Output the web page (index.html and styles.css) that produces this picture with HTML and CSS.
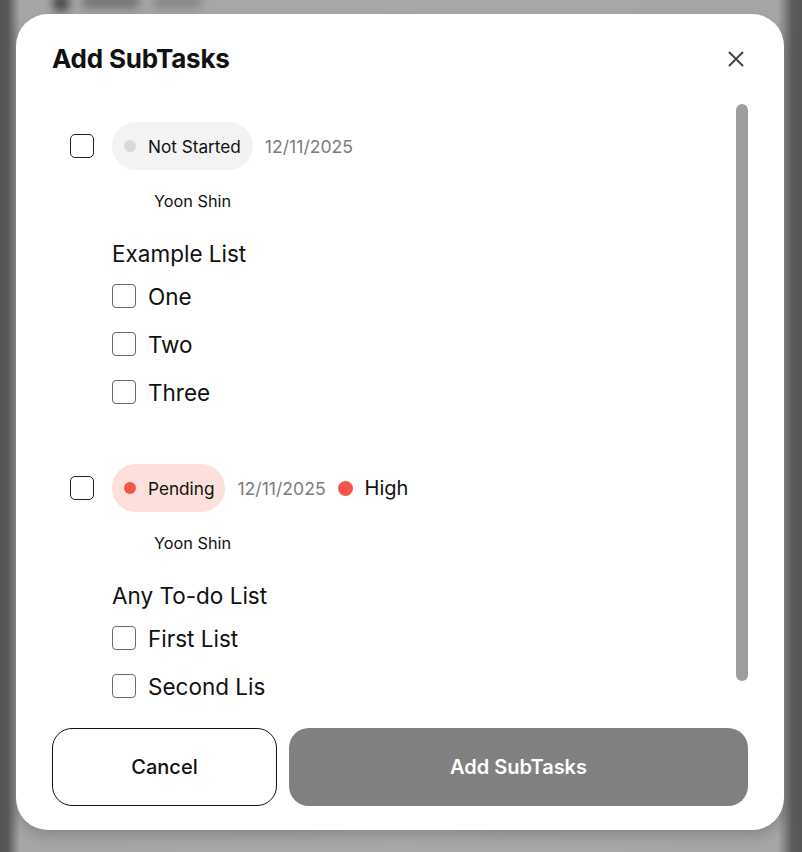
FILE: index.html
```html
<!DOCTYPE html>
<html lang="en">
<head>
<meta charset="utf-8">
<title>Add SubTasks</title>
<link rel="stylesheet" href="styles.css">
</head>
<body>
<div class="backdrop">
  <div class="ghost ghost-a"></div>
  <div class="ghost ghost-b"></div>
  <div class="ghost ghost-c"></div>
</div>
<div class="modal">
  <div class="modal-header">
    <h1 class="modal-title">Add SubTasks</h1>
    <button class="close-btn" aria-label="Close">
      <svg width="16" height="16" viewBox="0 0 16 16"><path d="M1.5 1.5 L14.5 14.5 M14.5 1.5 L1.5 14.5" stroke="#444" stroke-width="2" stroke-linecap="round" fill="none"/></svg>
    </button>
  </div>
  <div class="modal-body">
    <div class="scroll-area">
      <div class="task">
        <span class="task-check"></span>
        <div class="task-main">
          <div class="task-meta">
            <span class="pill pill-grey"><span class="dot dot-grey"></span>Not Started</span>
            <span class="date">12/11/2025</span>
          </div>
          <div class="assignee">Yoon Shin</div>
          <div class="list-title">Example List</div>
          <div class="list-item"><span class="item-check"></span>One</div>
          <div class="list-item"><span class="item-check"></span>Two</div>
          <div class="list-item"><span class="item-check"></span>Three</div>
        </div>
      </div>
      <div class="task">
        <span class="task-check"></span>
        <div class="task-main">
          <div class="task-meta">
            <span class="pill pill-red"><span class="dot dot-red"></span>Pending</span>
            <span class="date">12/11/2025</span>
            <span class="priority"><span class="priority-dot"></span>High</span>
          </div>
          <div class="assignee">Yoon Shin</div>
          <div class="list-title">Any To-do List</div>
          <div class="list-item"><span class="item-check"></span>First List</div>
          <div class="list-item"><span class="item-check"></span>Second Lis</div>
        </div>
      </div>
    </div>
    <div class="scroll-track"><div class="scroll-thumb"></div></div>
  </div>
  <div class="modal-footer">
    <button class="btn btn-cancel">Cancel</button>
    <button class="btn btn-primary">Add SubTasks</button>
  </div>
</div>
</body>
</html>
```

FILE: styles.css
```css
* { box-sizing: border-box; }
html, body { margin: 0; padding: 0; }
body {
  width: 802px;
  height: 852px;
  overflow: hidden;
  font-family: Inter, "Noto Sans", "Liberation Sans", sans-serif;
  color: #111;
  background: linear-gradient(to right, #545454 0px, #5a5a5a 8px, #7a7a7a 13px, #a6a6a6 20px, #a9a9a9 50%, #a6a6a6 778px, #7e7e7e 786px, #5c5c5c 792px, #555 802px);
  padding-top: 14px;
  padding-left: 16px;
  position: relative;
}
.backdrop { position: absolute; inset: 0; overflow: hidden; }
.ghost { position: absolute; background: #6a6a6a; filter: blur(4px); border-radius: 8px; }
.ghost-a { left: 52px; top: -6px; width: 18px; height: 18px; border-radius: 50%; background: #4a4a4a; }
.ghost-b { left: 82px; top: -4px; width: 58px; height: 12px; background: #707070; }
.ghost-c { left: 152px; top: -4px; width: 50px; height: 12px; background: #868686; }

.modal {
  position: relative;
  width: 768px;
  height: 816px;
  background: #fff;
  border-radius: 32px;
  padding: 28px 36px 24px;
  display: flex;
  flex-direction: column;
  box-shadow: 0 6px 14px rgba(0,0,0,0.18);
}
.modal-header {
  display: flex;
  align-items: center;
  justify-content: space-between;
  height: 34px;
}
.modal-title {
  margin: 0;
  font-size: 26px;
  line-height: 34px;
  font-weight: 700;
  letter-spacing: -0.2px;
}
.close-btn {
  border: 0;
  background: none;
  padding: 0;
  width: 24px;
  height: 24px;
  display: flex;
  align-items: center;
  justify-content: center;
}
.modal-body {
  margin-top: 28px;
  flex: 1;
  min-height: 0;
  display: flex;
  gap: 12px;
}
.scroll-area {
  flex: 1;
  overflow: hidden;
  padding: 18px 0 0 18px;
}
.scroll-track { width: 12px; }
.scroll-thumb {
  width: 12px;
  height: 577px;
  background: #9e9e9e;
  border-radius: 6px;
}
.task {
  display: flex;
  gap: 18px;
  margin-bottom: 48px;
}
.task-check {
  flex: none;
  width: 24px;
  height: 24px;
  margin-top: 12px;
  border: 1.5px solid #222;
  border-radius: 5px;
}
.task-main { display: flex; flex-direction: column; }
.task-meta {
  display: flex;
  align-items: center;
  height: 48px;
  gap: 12px;
}
.pill {
  display: inline-flex;
  align-items: center;
  height: 48px;
  padding: 0 12px;
  border-radius: 24px;
  font-size: 17.2px;
  gap: 12px;
  color: #111;
}
.pill-grey { background: #f3f3f3; }
.pill-red { background: #fde0db; padding-right: 11px; }
.dot { width: 12px; height: 12px; border-radius: 50%; }
.dot-grey { background: #d9d9d9; }
.dot-red { background: #f5564a; }
.date { font-size: 17.6px; color: #7b7b7b; }
.priority {
  display: inline-flex;
  align-items: center;
  gap: 12px;
  font-size: 20px;
  color: #111;
}
.priority-dot { width: 15px; height: 15px; border-radius: 50%; background: #f5564a; }
.assignee {
  margin-top: 21px;
  padding-left: 42px;
  font-size: 16.3px;
  line-height: 20px;
}
.list-title {
  margin-top: 29px;
  font-size: 22.5px;
  line-height: 28px;
}
.list-item {
  display: flex;
  align-items: center;
  gap: 12px;
  height: 48px;
  font-size: 22.5px;
}
.list-title + .list-item { margin-top: 4px; }
.item-check {
  width: 24px;
  height: 24px;
  border: 1.5px solid #6b6b6b;
  border-radius: 4px;
}
.modal-footer {
  margin-top: 24px;
  display: flex;
  gap: 12px;
}
.btn {
  height: 78px;
  border-radius: 20px;
  font-family: Inter, "Noto Sans", "Liberation Sans", sans-serif;
  font-size: 20px;
  font-weight: 600;
}
.btn-cancel {
  width: 225px;
  background: #fff;
  border: 1px solid #111;
  color: #111;
  font-weight: 500;
}
.btn-primary {
  flex: 1;
  background: #808080;
  border: 0;
  color: #fff;
}
```
